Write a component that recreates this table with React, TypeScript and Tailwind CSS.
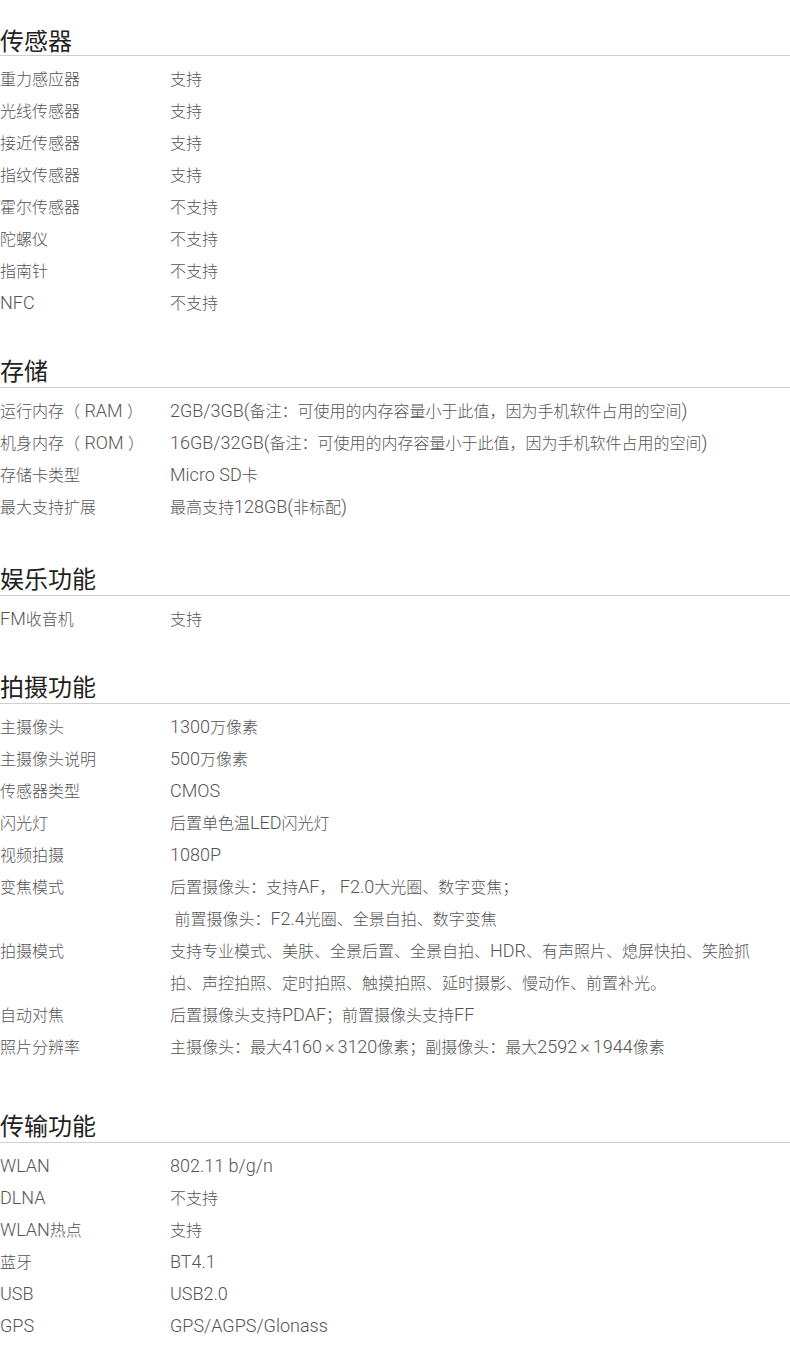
type Row = { label: string; value: string[] };

type Section = { title: string; top: string; pb: string; rows: Row[] };

const sections: Section[] = [
  {
    title: "传感器",
    top: "pt-[25px]",
    pb: "pb-0",
    rows: [
      { label: "重力感应器", value: ["支持"] },
      { label: "光线传感器", value: ["支持"] },
      { label: "接近传感器", value: ["支持"] },
      { label: "指纹传感器", value: ["支持"] },
      { label: "霍尔传感器", value: ["不支持"] },
      { label: "陀螺仪", value: ["不支持"] },
      { label: "指南针", value: ["不支持"] },
      { label: "NFC", value: ["不支持"] },
    ],
  },
  {
    title: "存储",
    top: "pt-[37px]",
    pb: "pb-[2px]",
    rows: [
      { label: "运行内存（ RAM ）", value: ["2GB/3GB(备注：可使用的内存容量小于此值，因为手机软件占用的空间)"] },
      { label: "机身内存（ ROM ）", value: ["16GB/32GB(备注：可使用的内存容量小于此值，因为手机软件占用的空间)"] },
      { label: "存储卡类型", value: ["Micro SD卡"] },
      { label: "最大支持扩展", value: ["最高支持128GB(非标配)"] },
    ],
  },
  {
    title: "娱乐功能",
    top: "pt-[41px]",
    pb: "pb-[2px]",
    rows: [{ label: "FM收音机", value: ["支持"] }],
  },
  {
    title: "拍摄功能",
    top: "pt-[37px]",
    pb: "pb-[2px]",
    rows: [
      { label: "主摄像头", value: ["1300万像素"] },
      { label: "主摄像头说明", value: ["500万像素"] },
      { label: "传感器类型", value: ["CMOS"] },
      { label: "闪光灯", value: ["后置单色温LED闪光灯"] },
      { label: "视频拍摄", value: ["1080P"] },
      { label: "变焦模式", value: ["后置摄像头：支持AF， F2.0大光圈、数字变焦；", " 前置摄像头：F2.4光圈、全景自拍、数字变焦"] },
      {
        label: "拍摄模式",
        value: [
          "支持专业模式、美肤、全景后置、全景自拍、HDR、有声照片、熄屏快拍、笑脸抓",
          "拍、声控拍照、定时拍照、触摸拍照、延时摄影、慢动作、前置补光。",
        ],
      },
      { label: "自动对焦", value: ["后置摄像头支持PDAF；前置摄像头支持FF"] },
      { label: "照片分辨率", value: ["主摄像头：最大4160×3120像素；副摄像头：最大2592×1944像素"] },
    ],
  },
  {
    title: "传输功能",
    top: "pt-[48px]",
    pb: "pb-[2px]",
    rows: [
      { label: "WLAN", value: ["802.11 b/g/n"] },
      { label: "DLNA", value: ["不支持"] },
      { label: "WLAN热点", value: ["支持"] },
      { label: "蓝牙", value: ["BT4.1"] },
      { label: "USB", value: ["USB2.0"] },
      { label: "GPS", value: ["GPS/AGPS/Glonass"] },
    ],
  },
];

// latin runs render bigger than the CJK ones in the original
const Mixed = ({ text }: { text: string }) => (
  <>
    {text.split(/([\x20-\x7E]+|×)/).map((part, i) =>
      part === "×" ? (
        <span key={i} className="font-['Roboto',sans-serif] text-[18px] mx-[3px]">×</span>
      ) : /^[\x20-\x7E]+$/.test(part) ? (
        <span key={i} className="font-['Roboto',sans-serif] text-[18px] whitespace-pre">{part}</span>
      ) : (
        <span key={i}>{part}</span>
      )
    )}
  </>
);

export default function App() {
  return (
    <div className="w-[790px] min-h-[1366px] bg-white font-['Noto_Sans_CJK_SC',sans-serif]">
      {sections.map((s) => (
        <div key={s.title} className={s.top}>
          <div className={`border-b border-[#cfcfcf] text-[24px] leading-[30px] text-[#222] ${s.pb}`}>{s.title}</div>
          <div className="pt-[6px]">
            {s.rows.map((r) => (
              <div key={r.label} className="flex text-[16px] leading-[32px] font-light text-[#555]">
                <div className="w-[170px] shrink-0 h-[32px] whitespace-nowrap">
                  <Mixed text={r.label} />
                </div>
                <div className="flex flex-col">
                  {r.value.map((v, i) => (
                    <div key={i} className="h-[32px] whitespace-nowrap">
                      <Mixed text={v} />
                    </div>
                  ))}
                </div>
              </div>
            ))}
          </div>
        </div>
      ))}
    </div>
  );
}
